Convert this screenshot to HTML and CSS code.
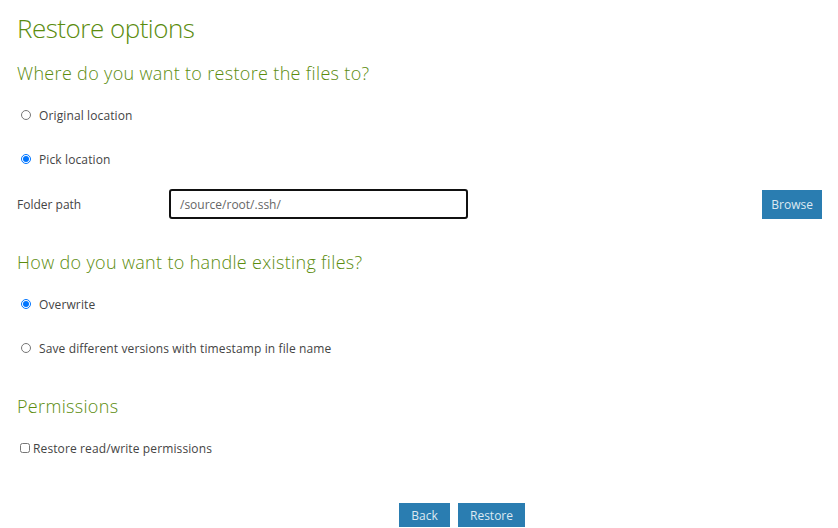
FILE: index.html
```html
<!DOCTYPE html>
<html>
<head>
<meta charset="utf-8">
<link rel="stylesheet" href="styles.css">
</head>
<body>
<div class="page">
  <h1 class="title">Restore options</h1>
  <h2 class="section">Where do you want to restore the files to?</h2>
  <label class="option"><input type="radio" name="loc"><span>Original location</span></label>
  <label class="option"><input type="radio" name="loc" checked><span>Pick location</span></label>
  <div class="folder-row">
    <span class="folder-label">Folder path</span>
    <div class="folder-input">/source/root/.ssh/</div>
    <button class="btn browse">Browse</button>
  </div>
  <h2 class="section second">How do you want to handle existing files?</h2>
  <label class="option"><input type="radio" name="ow" checked><span>Overwrite</span></label>
  <label class="option"><input type="radio" name="ow"><span>Save different versions with timestamp in file name</span></label>
  <h2 class="section third">Permissions</h2>
  <label class="check"><input type="checkbox"><span>Restore read/write permissions</span></label>
  <div class="actions">
    <button class="btn back">Back</button>
    <button class="btn">Restore</button>
  </div>
</div>
</body>
</html>
```
FILE: styles.css
```css
html, body { margin: 0; padding: 0; background: #fff; }
body { font-family: "Open Sans", "Noto Sans", sans-serif; color: #444; }
.page { padding: 10px 16px 0 17px; }
.title {
  margin: 0;
  font-weight: 300;
  font-size: 26px;
  line-height: 36px;
  letter-spacing: -0.5px;
  color: #5b8c0e;
}
.section {
  margin: 14px 0 7px 0;
  font-weight: 300;
  font-size: 18px;
  line-height: 26px;
  letter-spacing: 0.33px;
  color: #5b8c0e;
}
.section.second { margin-top: 30px; }
.section.third { margin-top: 23px; }
.option {
  display: flex;
  align-items: center;
  height: 44px;
  font-size: 12px;
  letter-spacing: 0.12px;
  color: #444;
}
.option input {
  margin: 0 8px 0 4px;
  width: 10px;
  height: 10px;
}
.folder-row {
  display: flex;
  align-items: center;
  height: 30px;
  margin-top: 8px;
  font-size: 12px;
}
.folder-label { width: 152px; }
.folder-input {
  box-sizing: border-box;
  width: 299px;
  height: 30px;
  border: 2px solid #111;
  border-radius: 3px;
  padding: 0 9px;
  display: flex;
  align-items: center;
  font-size: 12px;
  color: #666;
}
.btn {
  border: none;
  background: #2a7db1;
  color: #dde9f2;
  font-family: inherit;
  font-size: 12px;
  padding: 0 12px;
  height: 24px;
}
.back { width: 51px; padding: 0; }
.browse { margin-left: auto; height: 29px; padding: 0 9px; }
.check {
  display: flex;
  align-items: center;
  height: 44px;
  font-size: 12px;
  letter-spacing: 0.12px;
}
.check input { margin: 0 3px 0 3px; width: 10px; height: 10px; }
.actions {
  display: flex;
  gap: 8px;
  margin-top: 33px;
  padding-left: 382px;
}
```
